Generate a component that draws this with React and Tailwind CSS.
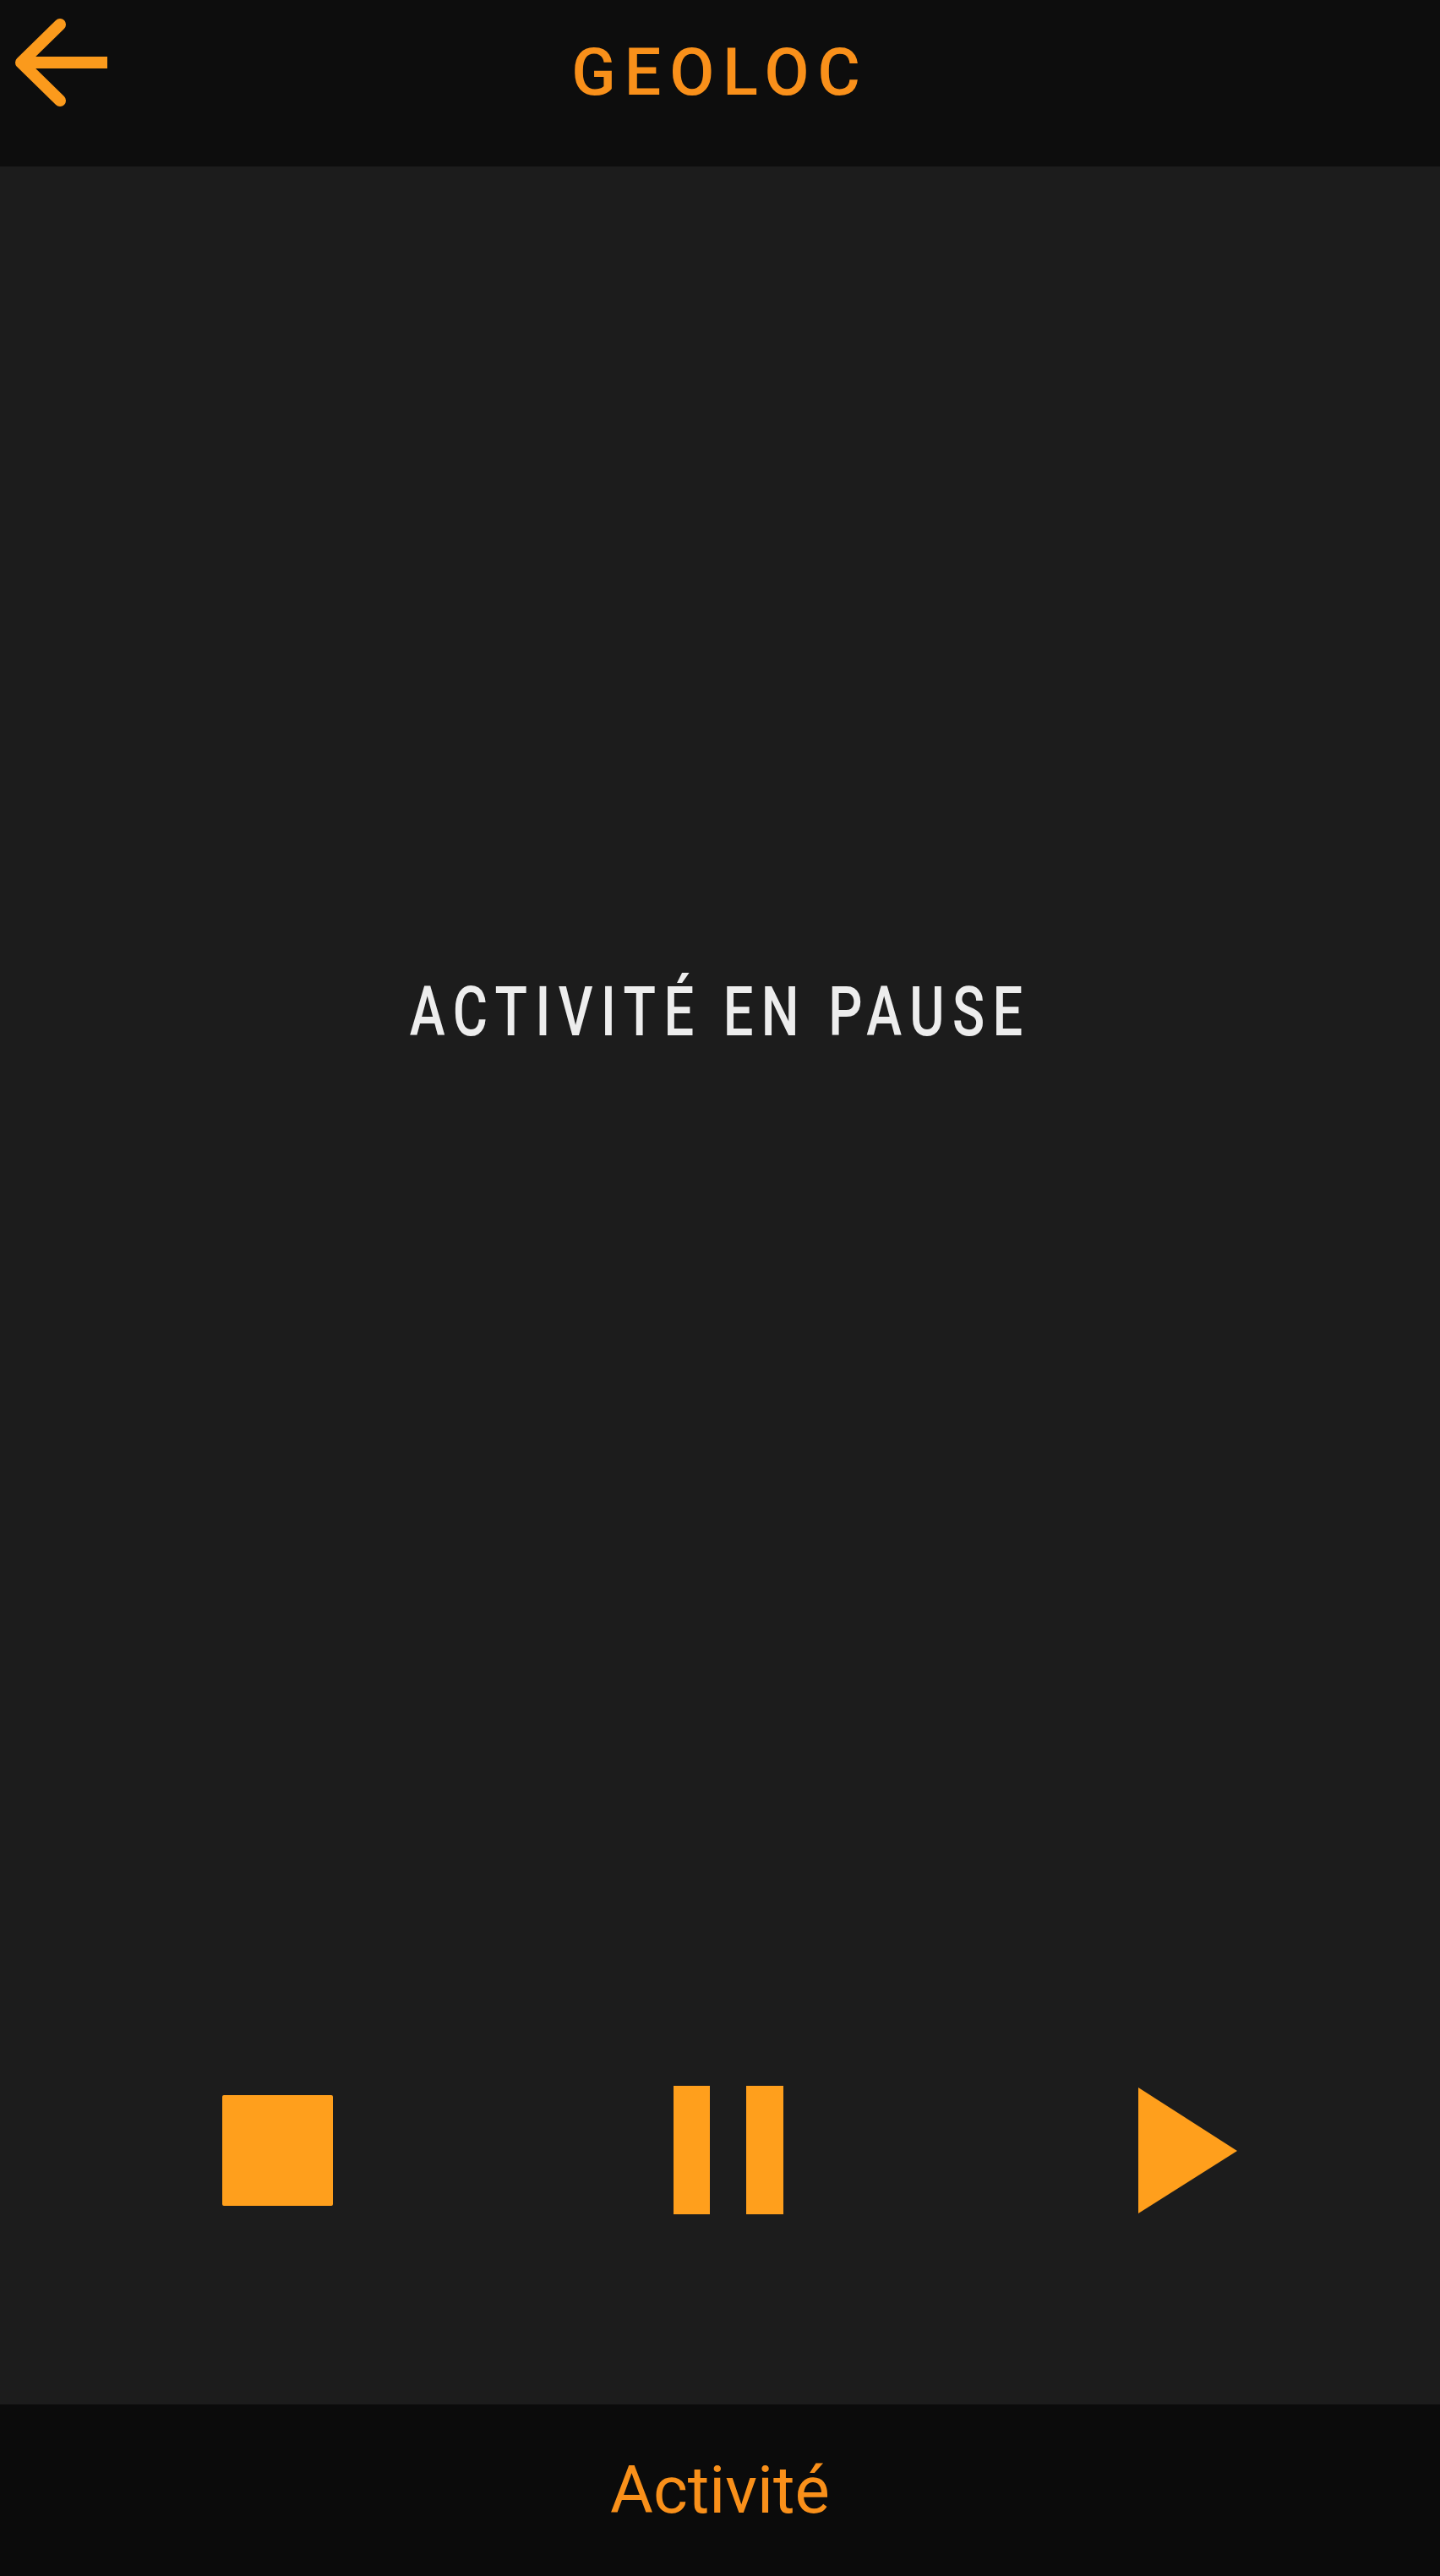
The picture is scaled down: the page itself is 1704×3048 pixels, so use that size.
import React from "react";

function BackArrow() {
  return (
    <svg width="140" height="150" viewBox="0 0 140 150" fill="none" className="block">
      <path d="M71 29 L25 74 L71 119" stroke="#fb9a1c" strokeWidth="14" strokeLinecap="round" strokeLinejoin="round" />
      <path d="M25 74 H127" stroke="#fb9a1c" strokeWidth="14" strokeLinecap="butt" />
    </svg>
  );
}

export default function App() {
  return (
    <div className="flex h-[3048px] w-full flex-col bg-[#1c1c1c] font-['Roboto','Liberation_Sans',sans-serif]">
      {/* Header */}
      <header className="grid h-[197px] shrink-0 grid-cols-[1fr_auto_1fr] items-start bg-[#0d0d0d]">
        <div className="flex items-start">
          <BackArrow />
        </div>
        <h1 className="mt-[48px] text-[77px] font-medium leading-none tracking-[0.13em] text-[#f9901a]">
          GEOLOC
        </h1>
        <div />
      </header>

      {/* Main */}
      <main className="flex flex-1 flex-col">
        <div className="flex justify-center pt-[959px]">
          <span className="inline-block origin-center scale-x-[0.77] text-[82px] font-medium leading-none tracking-[0.15em] text-[#ededed]">
            ACTIVITÉ EN PAUSE
          </span>
        </div>

        <div className="mt-[1230px] flex h-[152px] items-center pl-[263px]">
          {/* Stop */}
          <div className="h-[131px] w-[131px] rounded-[2px] bg-[#ff9f1c]" />
          {/* Pause */}
          <div className="ml-[403px] flex h-[152px] gap-[43px]">
            <div className="h-full w-[43px] bg-[#ff9f1c]" />
            <div className="h-full w-[44px] bg-[#ff9f1c]" />
          </div>
          {/* Play */}
          <svg width="117" height="149" viewBox="0 0 117 149" className="ml-[420px] block">
            <polygon points="0,0 117,75 0,149" fill="#ff9f1c" />
          </svg>
        </div>
      </main>

      {/* Footer */}
      <footer className="flex h-[203px] shrink-0 items-center justify-center bg-[#0b0b0b]">
        <span className="text-[78px] font-normal leading-none text-[#f9901a]">Activité</span>
      </footer>
    </div>
  );
}
